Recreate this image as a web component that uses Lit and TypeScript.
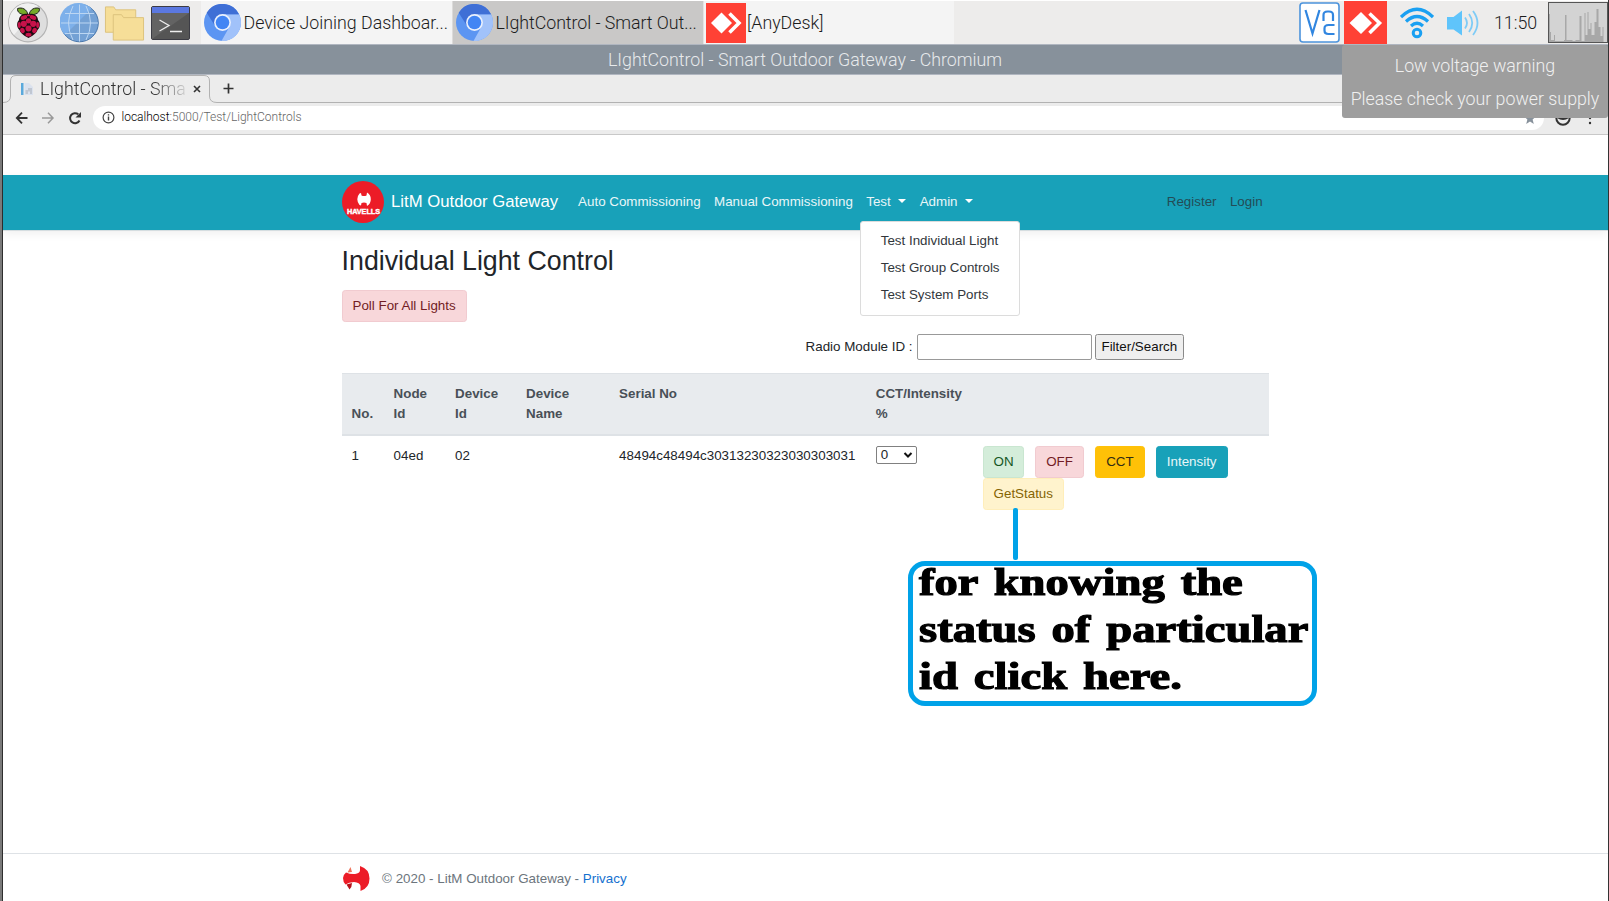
import { LitElement, html, css, svg } from "lit";
import { customElement } from "lit/decorators.js";

const chromium = svg`
  <circle cx="18" cy="18" r="18" fill="#5c95f2"/>
  <path d="M2.600 8.600 A18 18 0 0 1 34.300 10.300 L18 10.300 L11.200 22 Z" fill="#3f6fd6"/>
  <path d="M18 10.300 H34.300 A18 18 0 0 1 17 36 L24.900 22 Z" fill="#a1c2fa"/>
  <circle cx="18" cy="18" r="8.200" fill="#e9f0fd"/>
  <circle cx="18" cy="18" r="6.600" fill="#4285f4"/>`;

@customElement("task-bar")
export class TaskBar extends LitElement {
  static styles = css`
    :host { display: flex; height: 43px; background: #edeceb; font: 300 17.800px/46px Roboto, sans-serif; color: #1c1c1c; }
    svg { display: block; flex: none; }
    .launch { display: flex; width: 198px; box-sizing: border-box; padding-left: 5px; align-items: center; }
    .globe { margin-left: 10.500px; }
    .dir { margin-left: 4.500px; }
    .term { margin-left: 6px; }
    .task { display: flex; align-items: center; width: 251px; box-sizing: border-box; padding-left: 3px; gap: 2.500px; background: #f4f4f4; white-space: nowrap; }
    .task.on { background: #c9c8c7; border-left: 1px solid #dcdbda; }
    .task.on span { letter-spacing: -.05px; }
    .task.any { gap: 1px; padding-left: 2px; border-left: 1px solid #e4e3e2; }
    .tray { margin-left: auto; display: flex; align-items: center; }
    .vnc { margin-right: 4px; }
    .wifi { margin-left: 13px; }
    .snd { margin-left: 12px; }
    .clock { margin-left: 14px; width: 44px; white-space: nowrap; }
    .cpu { margin-left: 10px; }
  `;
  render() {
    return html`
      <div class="launch">
        <svg width="41" height="41" viewBox="0 0 41 41">
          <circle cx="20" cy="20.500" r="19.300" fill="#dedede" stroke="#b3b3b3" stroke-width="1.200"/>
          <path d="M6 33 A19 19 0 0 1 30 4 Z" fill="#f1f1f1"/>
          <path d="M20 13 C12 13 9 10 9.600 6.500 C14 5 19 7 20 13 Z M21 13 C29 13 32 10 31.400 6.500 C27 5 22 7 21 13 Z" fill="#75a928" stroke="#222" stroke-width="1"/>
          <path d="M20.500 12 C26 11 30 14 30 18 C33 21 32 26 29.500 28 C28 32 24 34 20.500 36 C17 34 13 32 11.500 28 C9 26 8 21 11 18 C11 14 15 11 20.500 12 Z" fill="#1d0a10"/>
          <g fill="#c7124a">
            <ellipse cx="16" cy="15.500" rx="3.400" ry="2.100" transform="rotate(-20 16 15.500)"/><ellipse cx="25" cy="15.500" rx="3.400" ry="2.100" transform="rotate(20 25 15.500)"/>
            <circle cx="20.500" cy="18.800" r="2.600"/><circle cx="15.800" cy="21.800" r="3.100"/><circle cx="25.200" cy="21.800" r="3.100"/>
            <ellipse cx="11.300" cy="23" rx="1.500" ry="3"/><ellipse cx="29.700" cy="23" rx="1.500" ry="3"/>
            <circle cx="20.500" cy="26.500" r="3"/><ellipse cx="14.500" cy="28.500" rx="2.200" ry="2.700" transform="rotate(-25 14.500 28.500)"/><ellipse cx="26.500" cy="28.500" rx="2.200" ry="2.700" transform="rotate(25 26.500 28.500)"/>
            <ellipse cx="20.500" cy="32.700" rx="3" ry="1.900"/><ellipse cx="20.500" cy="13.300" rx="2" ry=".9"/>
          </g>
        </svg>
        <svg class="globe" width="40" height="40" viewBox="0 0 40 40">
          <circle cx="19.500" cy="20" r="18.800" fill="#74a1d4" stroke="#4a78ac" stroke-width="1"/>
          <path d="M5 32 A18.500 18.500 0 0 1 31.500 5.500 Z" fill="#7db0ea"/>
          <g fill="none" stroke="#bcd6f2" stroke-width="1"><path d="M19.500 1.500V38.500M1 20H38M5 10.500H34M5 30.500H34M13 3Q4 20 13 37M26 3Q35 20 26 37"/></g>
        </svg>
        <svg class="dir" width="41" height="38" viewBox="0 0 42 38" fill="#f6de98" stroke="#dcc27c" stroke-width="1">
          <path d="M1.500 2.500 H10 L12 5.500 H32.500 V28.500 H1.500 Z"/><path d="M9.500 10.500 H18 L20 13.500 H40.500 V36.500 H9.500 Z"/>
        </svg>
        <svg class="term" width="39" height="34" viewBox="0 0 39 34">
          <rect x=".5" y=".5" width="38" height="33" rx="1.500" fill="#555" stroke="#3c3c44"/>
          <path d="M1 33V7H38Z" fill="#636363"/><rect x="1" y="1" width="37" height="6" fill="#5b78e0"/>
          <path d="M8.500 14 L18 19.500 L8.500 25" fill="none" stroke="#eee" stroke-width="1.300"/><path d="M19 25.500H31" stroke="#eee" stroke-width="1.500"/>
        </svg>
      </div>
      <div class="task"><svg width="37" height="37" viewBox="0 0 36 36">${chromium}</svg><span>Device Joining Dashboar...</span></div>
      <div class="task on"><svg width="37" height="37" viewBox="0 0 36 36">${chromium}</svg><span>LIghtControl - Smart Out...</span></div>
      <div class="task any"><svg width="40" height="40" viewBox="0 0 40 40">
        <rect width="40" height="40" fill="#ff4135"/><path d="M15.500 9.500L26 20L15.500 30.500L5 20Z" fill="#fff"/><path d="M23.500 10.500L33 20L23.500 29.500" fill="none" stroke="#fff" stroke-width="3.600"/></svg><span>[AnyDesk]</span></div>
      <div class="tray">
        <svg class="vnc" width="41" height="41" viewBox="0 0 41 41"><rect x="1" y="1" width="39" height="39" rx="3" fill="#fff" stroke="#4b93dc" stroke-width="1.600"/>
          <g fill="none" stroke="#3186e0" stroke-width="2.200"><path d="M6.500 8L13.500 31.500L20.500 8"/><path d="M24.500 19V13Q24.500 9.500 28.500 9.500H30Q34 9.500 34 13V19"/><path d="M35.500 23H29.500Q25.500 23 25.500 26.500V28.500Q25.500 32 29.500 32H35.500"/></g></svg>
        <svg width="43" height="43" viewBox="0 0 43 43"><rect width="43" height="43" fill="#ff4135"/><path d="M17 11L28 22L17 33L5.500 22Z" fill="#fff"/><path d="M25.500 12.500L35.500 22L25.500 32" fill="none" stroke="#fff" stroke-width="3.600"/></svg>
        <svg class="wifi" width="34" height="34" viewBox="0 0 34 34" fill="none" stroke="#1aa0f2" stroke-width="3.200"><path d="M1 11Q17-4.500 33 11" /><path d="M6 15.500Q17 5.500 28 15.500"/><path d="M11 20Q17 14.500 23 20"/><circle cx="17" cy="27" r="3.800" stroke-width="3"/></svg>
        <svg class="snd" width="34" height="28" viewBox="0 0 34 28"><path d="M1 8H7.500L16 1.500V26.500L7.500 20.500H1Z" fill="#5fc4fb"/><g fill="none" stroke="#7ecbf6" stroke-width="1.800"><path d="M19 8.500Q23 14 19 19.500M23 5Q29.500 14 23 23M27 2Q36 14 27 26"/></g></svg>
        <span class="clock">11:50</span>
        <svg class="cpu" width="60" height="41" viewBox="0 0 60 41"><rect x=".5" y=".5" width="59" height="40" fill="#d3d3d3" stroke="#555"/>
          <path d="M1 40V12h1v18h1v8h3V33h1v6h9V38h1V13h1.500v25h6v1h3v-1h4V14h2v25h3V11h1v22h2V10h1v17h2v-6h1v12h3V20h2V7h2v18h2v9h2v-9h1v15Z" fill="#a8a8a8"/></svg>
      </div>`;
  }
}

@customElement("browser-chrome")
export class BrowserChrome extends LitElement {
  static styles = css`
    :host { display: block; font-family: Roboto, sans-serif; background: #ececec; }
    svg { display: block; flex: none; }
    .title { height: 31px; box-sizing: border-box; border: solid #b0b6c0; border-width: 1px 0; background: #87919b; color: #e8eaec; font: 300 17.800px/30px Roboto, sans-serif; text-align: center; padding-right: 1px; }
    .tabs { display: flex; height: 28px; align-items: stretch; }
    .tab { display: grid; width: 214px; height: 28px; }
    .tab > * { grid-area: 1 / 1; }
    .in { display: flex; align-items: center; padding-left: 17px; }
    .name { margin-left: 6px; width: 148px; white-space: nowrap; font: 300 17.800px/26px Roboto, sans-serif; color: #333; -webkit-mask-image: linear-gradient(90deg, #000 76%, rgba(0,0,0,.15) 98%); }
    .x { margin-left: 5px; }
    .rest { flex: 1; border-bottom: 1px solid #b2b2b2; display: flex; align-items: center; padding-left: 5px; }
    .bar { display: flex; align-items: center; height: 32px; box-sizing: border-box; border-bottom: 1px solid #c8c8c8; padding: 0 0 2px 12px; }
    .fwd { margin-left: 12px; }
    .rel { margin-left: 12px; }
    .omni { margin-left: 10px; width: 1451px; height: 24px; border-radius: 12px; background: #fff; display: flex; align-items: center; box-sizing: border-box; padding: 0 8px 0 8.500px; }
    .url { margin-left: 7px; font: 300 12px/25px Roboto, sans-serif; color: #666; }
    .url b { font-weight: 300; color: #000; }
    .star { margin-left: auto; }
    .me { margin-left: 11px; }
    .dots { margin-left: 17px; }
  `;
  render() {
    return html`
      <div class="title">LIghtControl - Smart Outdoor Gateway - Chromium</div>
      <div class="tabs">
        <div class="tab">
          <svg width="214" height="28" viewBox="0 0 214 28"><path d="M0 27.500Q7.500 27.500 7.500 21V6Q7.500 .5 13 .5H201Q206.500 .5 206.500 6V21Q206.500 27.500 214 27.500" fill="none" stroke="#b2b2b2"/></svg>
          <div class="in">
            <svg width="14" height="14" viewBox="0 0 14 14"><rect x="1" y="1" width="2.500" height="12" fill="#5aa9dc"/><path d="M4.500 1H9L13 5V13H4.500Z" fill="#dbe2ee"/><path d="M5.500 12V8H8V6H12V12H10V9.500H8V12Z" fill="#c0c7d2"/></svg>
            <span class="name">LIghtControl - Sma</span>
            <svg class="x" width="8" height="8" viewBox="0 0 8 8"><path d="M1 1L7 7M7 1L1 7" stroke="#333" stroke-width="1.600"/></svg>
          </div>
        </div>
        <div class="rest"><svg width="13" height="13" viewBox="0 0 13 13"><path d="M6.500 1.500V11.500M1.500 6.500H11.500" stroke="#333" stroke-width="1.700"/></svg></div>
      </div>
      <div class="bar">
        <svg width="14" height="14" viewBox="0 0 14 14" fill="none" stroke="#333" stroke-width="1.800"><path d="M12.500 7H2M7 1.700L1.800 7L7 12.300"/></svg>
        <svg class="fwd" width="14" height="14" viewBox="0 0 14 14" fill="none" stroke="#999" stroke-width="1.500"><path d="M1 7H12M7 1.700L12 7L7 12.300"/></svg>
        <svg class="rel" width="16" height="14" viewBox="0 0 16 14"><path d="M12.500 9.500A5 5 0 1 1 11.300 3.300" fill="none" stroke="#333" stroke-width="2"/><path d="M14 1V6.500H8.500Z" fill="#333"/></svg>
        <div class="omni">
          <svg width="13" height="13" viewBox="0 0 13 13"><circle cx="6.500" cy="6.500" r="5.400" fill="none" stroke="#444" stroke-width="1.200"/><path d="M6.500 5.600V9.600M6.500 3.200V4.600" stroke="#444" stroke-width="1.400"/></svg>
          <span class="url"><b>localhost</b>:5000/Test/LightControls</span>
          <svg class="star" width="12" height="12" viewBox="0 0 12 12"><path d="M6 0L7.600 4.200L12 4.500L8.600 7.400L9.800 12L6 9.400L2.200 12L3.400 7.400L0 4.500L4.400 4.200Z" fill="#87919b"/></svg>
        </div>
        <svg class="me" width="16" height="16" viewBox="0 0 16 16"><circle cx="8" cy="8" r="6.700" fill="#ececec" stroke="#333" stroke-width="2"/><path d="M2 5H14V8Q8 12 2 8Z" fill="#333"/></svg>
        <svg class="dots" width="4" height="14" viewBox="0 0 4 14" fill="#333"><circle cx="2" cy="2" r="1.200"/><circle cx="2" cy="7" r="1.200"/><circle cx="2" cy="12" r="1.200"/></svg>
      </div>`;
  }
}

@customElement("gateway-page")
export class GatewayPage extends LitElement {
  static styles = css`
    :host { display: flex; flex-direction: column; flex: 1; background: #fff; color: #212529; font: 13.360px/20px "Liberation Sans", Arial, sans-serif; padding-top: 40px; }
    svg { display: block; flex: none; }
    .nav { height: 55px; background: #18a1b9; box-shadow: 0 1px 0 #d5dde0, 0 3px 10px rgba(0,0,0,.07); box-sizing: border-box; }
    .wrap { width: 927.500px; margin-left: 338.600px; }
    .nav .wrap { display: flex; align-items: center; height: 54.500px; color: #fff; white-space: nowrap; }
    .brand { font-size: 16.700px; margin: 0 0 0 7.500px; width: 187px; }
    .item { margin-right: 13.400px; color: #e9f6f8; }
    .item i { display: inline-block; border: 4px solid transparent; border-top-color: #fff; border-bottom: 0; margin-left: 7.500px; vertical-align: 3.500px; }
    .drop { position: relative; }
    .menu { position: absolute; left: -6.300px; top: 29px; width: 160px; height: 95px; box-sizing: border-box; border: 1px solid #dcdcdc; border-radius: 3px; background: #fff; color: #32373c; padding: 6px 19.800px; line-height: 26.700px; z-index: 2; }
    .acct { margin-left: auto; display: flex; gap: 13.400px; color: #234c56; padding-right: 6.500px; }
    .logo { font: 700 7.300px "Liberation Sans", Arial, sans-serif; }
    h1 { font-size: 26.760px; font-weight: 400; line-height: 32px; margin: 14.500px 0 13px; }
    .btn { display: inline-block; box-sizing: border-box; height: 32px; border: 1px solid; border-radius: 3.300px; line-height: 30px; padding: 0; text-align: center; white-space: nowrap; }
    .red { color: #721c24; background: #f8d7da; border-color: #f1cbd0; }
    .green { color: #155724; background: #d4edda; border-color: #c9e6d0; }
    .amber { color: #322c14; background: #ffc107; border-color: #ffc107; }
    .teal { color: #e9f6f8; background: #18a1b9; border-color: #18a1b9; }
    .cream { color: #856404; background: #fff3cd; border-color: #ffeeba; }
    .w-poll { width: 125px; } .w-on { width: 41.500px; } .w-off { width: 49px; } .w-cct { width: 50px; } .w-int { width: 72px; } .w-get { width: 81px; }
    .find { display: flex; align-items: center; height: 26px; margin: 12.500px 0 13px; padding-left: 464px; white-space: nowrap; }
    .find span { width: 111px; }
    .find .in { width: 175px; height: 26px; box-sizing: border-box; border: 1.500px solid #999; border-radius: 2px; }
    .find .go { width: 89.500px; height: 26px; box-sizing: border-box; border: 1px solid #8a8a8a; border-radius: 2.500px; background: #efefef; color: #111; margin-left: 3px; line-height: 24px; text-align: center; }
    .row { display: grid; grid-template-columns: 42px 61.500px 71px 93px 256.700px 107px 1fr; padding-left: 10px; box-sizing: border-box; }
    .head { height: 63px; background: #e8ebee; border-top: 1px solid #dee2e6; border-bottom: 2px solid #dee2e6; font-weight: 700; color: #495057; padding-top: 9.500px; }
    .head :first-child { padding-top: 20px; }
    .body { padding-top: 10px; }
    .sel { display: flex; align-items: center; justify-content: space-between; width: 41px; height: 18px; border: 1px solid #808080; border-radius: 2px; box-sizing: border-box; padding: 0 3px 0 4px; }
    .acts { display: flex; flex-wrap: wrap; width: 260px; column-gap: 10.800px; align-content: flex-start; }
    .foot { margin-top: auto; height: 48px; box-sizing: border-box; border-top: 1px solid #dee2e6; color: #6c757d; }
    .foot .wrap { display: flex; align-items: center; height: 49px; gap: 12.500px; padding-left: 1px; box-sizing: border-box; }
    .foot a { color: #1470cf; }
  `;
  render() {
    const heads = [["No."], ["Node", "Id"], ["Device", "Id"], ["Device", "Name"], ["Serial No"], ["CCT/Intensity", "%"]];
    return html`
      <div class="nav"><div class="wrap">
        <svg width="42" height="42" viewBox="0 0 42 42"><circle cx="21" cy="21" r="21" fill="#ec1c27"/>
          <path d="M17.500 12.500L19 12L19.500 14.500Q22 15.500 24.500 14.500L25 11.500Q28.800 13.500 28.800 18.300Q28.800 23 25 25L24.500 22Q22 21 19.500 22L19 24.500L17.500 24Q15.300 21.500 15.300 18.300Q15.300 15 17.500 12.500Z" fill="#fff"/>
          <text class="logo" x="5" y="33" textLength="33" fill="#fff" stroke="#fff" stroke-width=".4">HAVELLS</text></svg>
        <span class="brand">LitM Outdoor Gateway</span>
        <span class="item">Auto Commissioning</span><span class="item">Manual Commissioning</span>
        <span class="item drop">Test<i></i>
          <div class="menu"><div>Test Individual Light</div><div>Test Group Controls</div><div>Test System Ports</div></div></span>
        <span class="item">Admin<i></i></span>
        <div class="acct"><span>Register</span><span>Login</span></div>
      </div></div>
      <div class="wrap">
        <h1>Individual Light Control</h1>
        <div class="btn red w-poll">Poll For All Lights</div>
        <div class="find"><span>Radio Module ID :</span><div class="in"></div><div class="go">Filter/Search</div></div>
        <div class="row head">${heads.map((h) => html`<div>${h.map((t) => html`${t}<br>`)}</div>`)}</div>
        <div class="row body">
          <div>1</div><div>04ed</div><div>02</div><div></div><div>48494c48494c30313230323030303031</div>
          <div><div class="sel">0<svg width="10" height="6" viewBox="0 0 10 6"><path d="M1.500 1L5 4.500L8.500 1" fill="none" stroke="#111" stroke-width="2"/></svg></div></div>
          <div class="acts"><div class="btn green w-on">ON</div><div class="btn red w-off">OFF</div><div class="btn amber w-cct">CCT</div><div class="btn teal w-int">Intensity</div><div class="btn cream w-get">GetStatus</div></div>
        </div>
      </div>
      <div class="foot"><div class="wrap">
        <svg width="27" height="25" viewBox="0 0 27 25"><path d="M3 6.500Q9 9 14 7.500Q17 6.500 17 4V0Q26.500 3 26.500 12.500Q26.500 22 17.500 25V20Q17 16.500 11 16Q6 16 2.500 18.500Q0 16 0 12Q0 9 3 6.500Z" fill="#ec1c27"/><path d="M7.500 1L9 6L4.500 6.500Z" fill="#f0745c"/><path d="M3.500 18.500L9 17Q9 21 6.500 23.500Z" fill="#b5121b"/></svg>
        <span>© 2020 - LitM Outdoor Gateway - <a>Privacy</a></span>
      </div></div>`;
  }
}

@customElement("app-root")
export class AppRoot extends LitElement {
  static styles = css`
    :host { display: block; position: relative; width: 1609px; height: 901px; overflow: hidden; background: #fff; }
    .frame { display: flex; flex-direction: column; height: 901px; box-sizing: border-box; padding-top: 1px; border-right: 1px solid #333; border-left: 1px solid #2e2e2e; margin-left: 2px; }
    .edge { position: absolute; left: 0; top: 0; width: 2px; height: 901px; background: #7a7a7a; }
    .toast { position: absolute; left: 1342px; top: 45px; width: 266px; height: 73px; border-radius: 3px; background: #9e9e9e; color: #f0f0f0; font: 300 17.800px/32.500px Roboto, sans-serif; text-align: center; padding-top: 5px; box-sizing: border-box; white-space: nowrap; }
    .stem { position: absolute; left: 1013px; top: 508px; width: 5px; height: 52px; border-radius: 2px; background: #00a2e8; }
    .note { position: absolute; left: 908px; top: 561px; width: 409px; height: 145px; box-sizing: border-box; border: 5px solid #00a2e8; border-radius: 17px; padding-left: 6px; }
    .note p { margin: -7.500px 0 0; font: 700 38px/47px "Liberation Serif", "Times New Roman", serif; color: #000; -webkit-text-stroke: 1.200px #000; white-space: nowrap; word-spacing: 3.500px; transform: scaleX(1.227); transform-origin: 0 0; }
  `;
  render() {
    return html`
      <div class="frame"><task-bar></task-bar><browser-chrome></browser-chrome><gateway-page></gateway-page></div>
      <div class="edge"></div>
      <div class="toast">Low voltage warning<br>Please check your power supply</div>
      <div class="stem"></div>
      <div class="note"><p>for knowing the<br>status of particular<br>id click here.</p></div>`;
  }
}
